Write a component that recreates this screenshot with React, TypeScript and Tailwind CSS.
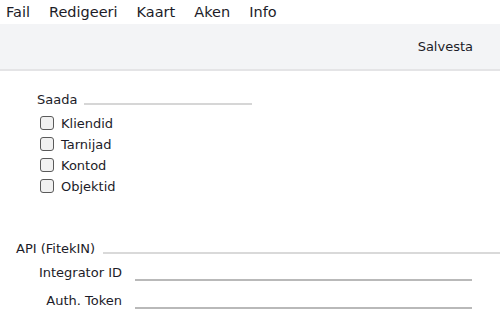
export default function App() {
  const checks = ['Kliendid', 'Tarnijad', 'Kontod', 'Objektid']

  return (
    <div className="w-[500px] h-[319px] bg-white text-[#1c1c28] overflow-hidden" style={{ fontFamily: '"DejaVu Sans", sans-serif' }}>
      {/* menu */}
      <div className="h-[24px] flex items-center pl-[6px] gap-[19px] text-[14.5px] leading-none">
        <span>Fail</span>
        <span>Redigeeri</span>
        <span>Kaart</span>
        <span>Aken</span>
        <span>Info</span>
      </div>

      {/* toolbar */}
      <div className="h-[47px] bg-[#f3f4f6] border-b-2 border-[#e4e4e6] flex items-center justify-end pr-[27px] text-[13px]">
        <span>Salvesta</span>
      </div>

      <div className="text-[13px] leading-none">
        {/* Saada */}
        <div className="pl-[37px] pt-[22px]">
          <div className="flex items-end">
            <span>Saada</span>
            <div className="ml-[7px] w-[168px] h-[2px] bg-[#d6d6d6] mb-[1px]" />
          </div>
          <div className="mt-[10px] pl-[3px] flex flex-col gap-[7px]">
            {checks.map((c) => (
              <label key={c} className="flex items-center h-[14px]">
                <span className="w-[14px] h-[14px] rounded-[3px] border border-[#5a5a5a] bg-[#f1f1f1]" />
                <span className="ml-[7px]">{c}</span>
              </label>
            ))}
          </div>
        </div>

        {/* API */}
        <div className="mt-[49px] pl-[16px] flex items-end">
          <span>API (FitekIN)</span>
          <div className="ml-[8px] flex-1 h-[2px] bg-[#d9d9d9] mb-[1px]" />
        </div>

        <div className="mt-[11px] flex flex-col gap-[15px]">
          {['Integrator ID', 'Auth. Token'].map((l) => (
            <div key={l} className="flex items-end">
              <span className="w-[122px] text-right">{l}</span>
              <div className="ml-[13px] w-[337px] h-[2px] bg-[#b9b9b9] -mb-[2px]" />
            </div>
          ))}
        </div>
      </div>
    </div>
  )
}
